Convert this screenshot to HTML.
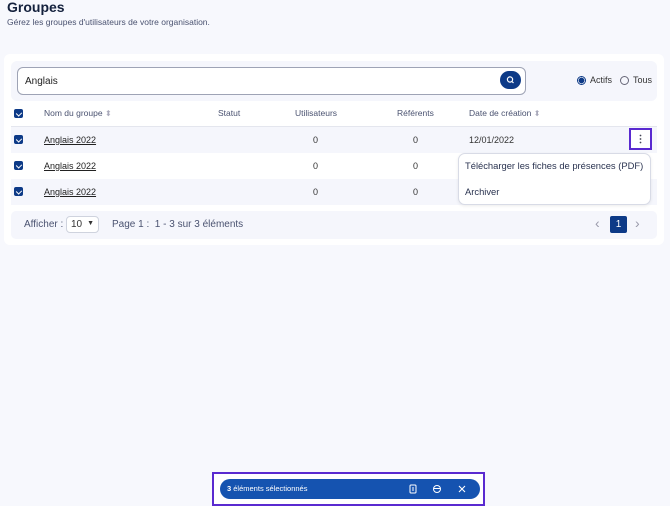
<!DOCTYPE html>
<html><head><meta charset="utf-8"><style>
*{box-sizing:border-box;margin:0;padding:0}
body{width:670px;height:506px;background:#f7f8fd;font-family:"Liberation Sans",sans-serif;color:#2a3350;position:relative;overflow:hidden}
.abs{position:absolute;white-space:nowrap}
h1{position:absolute;left:7px;top:0px;font-size:14px;font-weight:bold;color:#14213d;line-height:14px}
.sub{left:7px;top:17px;font-size:8.5px;color:#4a5270}
.card{left:4px;top:54px;width:660px;height:191px;background:#fff;border-radius:6px}
.sbar{left:11px;top:61px;width:646px;height:40px;background:#f5f6fc;border-radius:6px}
.inp{left:17px;top:67px;width:509px;height:28px;border:1px solid #9ea3b5;border-radius:6px;background:#fff;font-size:10px;padding:8px 7px;color:#222}
.sbtn{left:500px;top:71px;width:21px;height:18px;border-radius:9px;background:#0d3a87}
.radio{width:9px;height:9px;border-radius:50%;border:1px solid #667}
.t{font-size:8.5px;color:#4a5270}
.row{left:11px;width:646px;height:26px}
.cb{width:9px;height:9px;border-radius:2px;background:#0d3a87}
.cb:after{content:"";position:absolute;left:2.5px;top:1.5px;width:3px;height:4px;border:solid #fff;border-width:0 1px 1px 0;transform:rotate(45deg)}
.lnk{font-size:9px;text-decoration:underline;color:#222}
.num{font-size:9px;color:#333}
.srt{color:#aab;font-size:8px}
</style></head><body>
<h1>Groupes</h1>
<div class="abs sub">Gérez les groupes d'utilisateurs de votre organisation.</div>
<div class="abs card"></div>
<div class="abs sbar"></div>
<div class="abs inp">Anglais</div>
<div class="abs sbtn"><svg width="21" height="18" viewBox="0 0 21 18"><circle cx="10" cy="8.5" r="2.6" fill="none" stroke="#fff" stroke-width="1.2"/><line x1="12" y1="10.5" x2="13.5" y2="12" stroke="#fff" stroke-width="1.2"/></svg></div>
<div class="abs radio" style="left:577px;top:76px;border-color:#0d3a87;background:radial-gradient(#0d3a87 55%,#fff 60%)"></div>
<div class="abs t" style="left:590px;top:75px;color:#333;font-size:9px">Actifs</div>
<div class="abs radio" style="left:620px;top:76px"></div>
<div class="abs t" style="left:633px;top:75px;color:#333;font-size:9px">Tous</div>

<div class="abs cb" style="left:14px;top:109px"></div>
<div class="abs t" style="left:44px;top:108px">Nom du groupe <span class="srt">⬍</span></div>
<div class="abs t" style="left:218px;top:108px">Statut</div>
<div class="abs t" style="left:295px;top:108px">Utilisateurs</div>
<div class="abs t" style="left:397px;top:108px">Référents</div>
<div class="abs t" style="left:469px;top:108px">Date de création <span class="srt">⬍</span></div>
<div class="abs" style="left:11px;top:126px;width:646px;height:1px;background:#e4e6ee"></div>

<div class="abs row" style="top:127px;background:#f5f6fc"></div>
<div class="abs row" style="top:153px;background:#fff"></div>
<div class="abs row" style="top:179px;background:#f5f6fc"></div>
<div class="abs cb" style="left:14px;top:135px"></div>
<div class="abs cb" style="left:14px;top:161px"></div>
<div class="abs cb" style="left:14px;top:187px"></div>
<div class="abs lnk" style="left:44px;top:135px">Anglais 2022</div>
<div class="abs lnk" style="left:44px;top:161px">Anglais 2022</div>
<div class="abs lnk" style="left:44px;top:187px">Anglais 2022</div>
<div class="abs num" style="left:313px;top:135px">0</div>
<div class="abs num" style="left:313px;top:161px">0</div>
<div class="abs num" style="left:313px;top:187px">0</div>
<div class="abs num" style="left:413px;top:135px">0</div>
<div class="abs num" style="left:413px;top:161px">0</div>
<div class="abs num" style="left:413px;top:187px">0</div>
<div class="abs num" style="left:469px;top:135px">12/01/2022</div>
<div class="abs" style="left:629px;top:128px;width:23px;height:22px;border:2px solid #5a2ad0;background:#fff"><svg width="19" height="18"><circle cx="9.5" cy="5.5" r="0.9" fill="#445"/><circle cx="9.5" cy="9" r="0.9" fill="#445"/><circle cx="9.5" cy="12.5" r="0.9" fill="#445"/></svg></div>
<div class="abs" style="left:458px;top:153px;width:193px;height:52px;background:#fff;border:1px solid #d8dbe6;border-radius:7px;box-shadow:0 1px 3px rgba(0,0,0,.08)"></div>
<div class="abs" style="left:465px;top:160px;font-size:9.4px;color:#2a3350">Télécharger les fiches de présences (PDF)</div>
<div class="abs" style="left:465px;top:186px;font-size:9.4px;color:#2a3350">Archiver</div>

<div class="abs" style="left:11px;top:211px;width:646px;height:28px;background:#f5f6fc;border-radius:5px"></div>
<div class="abs" style="left:24px;top:219px;font-size:10px;color:#4a5270">Afficher :</div>
<div class="abs" style="left:66px;top:216px;width:33px;height:17px;border:1px solid #cfd3de;border-radius:4px;background:#fff;font-size:10px;padding:2px 4px;color:#333">10<span style="position:absolute;right:4px;top:3px;font-size:7px">▼</span></div>
<div class="abs" style="left:112px;top:219px;font-size:10px;color:#4a5270">Page 1 :&nbsp; 1 - 3 sur 3 éléments</div>
<div class="abs" style="left:595px;top:215px;font-size:14px;color:#99a">‹</div>
<div class="abs" style="left:610px;top:216px;width:17px;height:17px;background:#0d3a87;border-radius:2px;color:#fff;font-size:10px;text-align:center;line-height:17px">1</div>
<div class="abs" style="left:635px;top:215px;font-size:14px;color:#99a">›</div>

<div class="abs" style="left:212px;top:472px;width:273px;height:34px;border:2px solid #5a2ad0;background:#fff"></div>
<div class="abs" style="left:220px;top:479px;width:260px;height:20px;background:#1553b0;border-radius:10px"></div>
<div class="abs" style="left:227px;top:484px;font-size:7.5px;color:#fff"><b>3</b> éléments sélectionnés</div>
<svg class="abs" style="left:408px;top:484px" width="10" height="10"><rect x="2" y="1" width="6" height="8" rx="1" fill="none" stroke="#fff" stroke-width="1"/><line x1="4" y1="4" x2="6" y2="4" stroke="#fff"/><line x1="4" y1="6" x2="6" y2="6" stroke="#fff"/></svg>
<svg class="abs" style="left:432px;top:484px" width="10" height="10"><circle cx="5" cy="5" r="3.5" fill="none" stroke="#fff" stroke-width="1"/><line x1="1.5" y1="4.5" x2="8.5" y2="4.5" stroke="#fff"/></svg>
<svg class="abs" style="left:457px;top:484px" width="10" height="10"><path d="M2 2L8 8M8 2L2 8" stroke="#fff" stroke-width="1.1"/></svg>
</body></html>
